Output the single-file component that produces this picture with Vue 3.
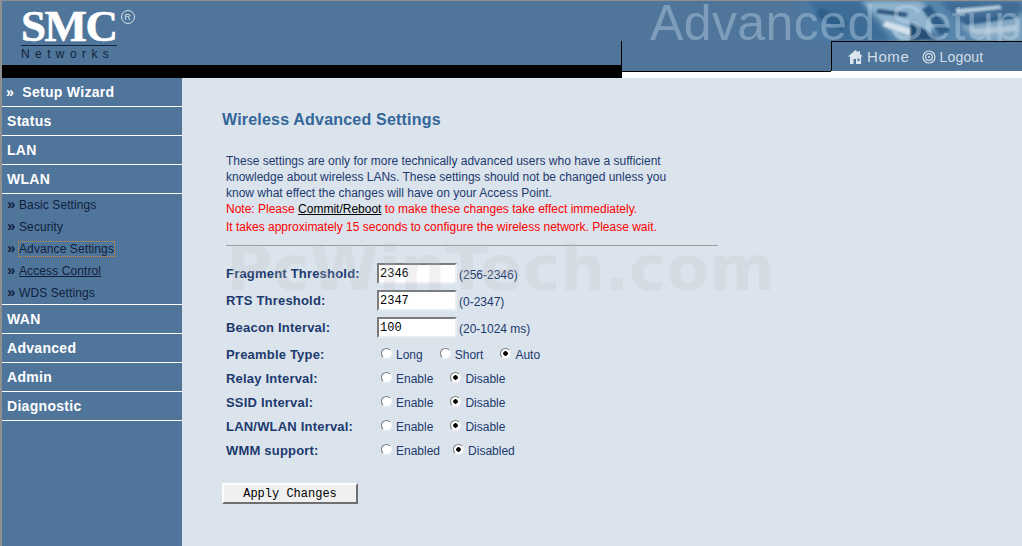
<script setup>
const topNav = ['Status', 'LAN', 'WLAN']
const subNav = [
  { label: 'Basic Settings' },
  { label: 'Security' },
  { label: 'Advance Settings', cls: 'focused' },
  { label: 'Access Control', cls: 'hovered' },
  { label: 'WDS Settings' }
]
const bottomNav = ['WAN', 'Advanced', 'Admin', 'Diagnostic']
const textRows = [
  { label: 'Fragment Threshold:', value: '2346', hint: '(256-2346)' },
  { label: 'RTS Threshold:', value: '2347', hint: '(0-2347)' },
  { label: 'Beacon Interval:', value: '100', hint: '(20-1024 ms)' }
]
const radioRows = [
  { label: 'Preamble Type:', name: 'pre', options: ['Long', 'Short', 'Auto'], checked: 2 },
  { label: 'Relay Interval:', name: 'relay', options: ['Enable', 'Disable'], checked: 1 },
  { label: 'SSID Interval:', name: 'ssid', options: ['Enable', 'Disable'], checked: 1 },
  { label: 'LAN/WLAN Interval:', name: 'lan', options: ['Enable', 'Disable'], checked: 1 },
  { label: 'WMM support:', name: 'wmm', options: ['Enabled', 'Disabled'], checked: 1, tight: true }
]
</script>

<template>
  <div class="page">
    <header class="header">
      <div class="head-left">
        <div class="logo">
          <div class="logo-top"><span class="smc">SMC</span><span class="reg">R</span></div>
          <div class="networks">Networks</div>
        </div>
        <div class="black-bar"></div>
      </div>
      <div class="head-right">
        <div class="banner">
          <svg class="texture" width="232" height="40" viewBox="0 0 232 40" preserveAspectRatio="none">
            <defs>
              <linearGradient id="fade" x1="0" x2="1" y1="0" y2="0">
                <stop offset="0" stop-color="#4f759b" />
                <stop offset="0.15" stop-color="#4a7ba4" />
                <stop offset="1" stop-color="#5f8cb0" />
              </linearGradient>
              <filter id="b2"><feGaussianBlur stdDeviation="2" /></filter>
              <filter id="b1"><feGaussianBlur stdDeviation="1" /></filter>
            </defs>
            <rect width="232" height="40" fill="url(#fade)" />
            <g filter="url(#b2)">
              <path d="M20 0 L70 0 L100 40 L40 40 Z" fill="#3d6d97" />
              <path d="M72 0 L130 0 L150 18 L135 40 L110 40 Z" fill="#8fb3cd" />
              <path d="M150 0 L232 0 L232 12 L170 22 Z" fill="#3f6c95" />
              <path d="M170 24 L232 14 L232 40 L190 40 Z" fill="#86a9c4" />
            </g>
            <g filter="url(#b1)">
              <path d="M88 8 L118 12 L116 16 L86 12 Z" fill="#2d587f" />
              <path d="M96 20 L128 30 L124 36 L92 25 Z" fill="#d5e3ec" />
              <path d="M120 20 L150 38 L120 40 Z" fill="#274f75" />
              <path d="M140 4 L160 30 L150 34 L132 8 Z" fill="#2f5d87" />
              <path d="M165 8 L210 4 L212 8 L168 13 Z" fill="#b3cadb" />
              <path d="M172 18 L228 13 L228 17 L176 24 Z" fill="#31608a" />
              <path d="M180 28 L226 24 L228 30 L186 34 Z" fill="#aec6d7" />
              <path d="M30 6 L58 22 L52 30 L26 14 Z" fill="#2f5f8a" />
            </g>
          </svg>
          <span class="banner-text">Advanced Setup</span>
        </div>
        <div class="tab-row">
          <div class="tab-spacer"></div>
          <nav class="tab">
            <a class="tab-link home">
              <svg width="17" height="16" viewBox="0 0 17 16">
                <path d="M8.5 1 L1 7.5 H3 V15 H6.5 V10 H9 V15 H14 V7.5 H16 L13 5 V2 H11.5 V3.6 Z M10.5 9.5 H12.5 V12 H10.5 Z" fill="#dbe5ed" fill-rule="evenodd" />
              </svg>
              Home
            </a>
            <a class="tab-link logout">
              <svg width="14" height="14" viewBox="0 0 14 14" fill="none" stroke="#d3dfe9">
                <circle cx="7" cy="7" r="6" stroke-width="1.2" />
                <circle cx="7" cy="7" r="3.4" stroke-width="1.2" />
                <circle cx="7" cy="7" r="1.1" fill="#d3dfe9" stroke="none" />
              </svg>
              Logout
            </a>
          </nav>
        </div>
      </div>
    </header>

    <div class="body">
      <aside class="sidebar">
        <a class="nav-item wizard"><span class="chev">»</span> Setup Wizard</a>
        <a v-for="item in topNav" :key="item" class="nav-item">{{ item }}</a>
        <div class="subnav">
          <div v-for="s in subNav" :key="s.label" class="sub-item">
            <span class="sub-chev">»</span>
            <a class="sub-link" :class="s.cls">{{ s.label }}</a>
          </div>
        </div>
        <a v-for="item in bottomNav" :key="item" class="nav-item">{{ item }}</a>
      </aside>

      <main class="main">
        <h1 class="title">Wireless Advanced Settings</h1>
        <div class="intro">
          <p>These settings are only for more technically advanced users who have a sufficient<br />knowledge about wireless LANs. These settings should not be changed unless you<br />know what effect the changes will have on your Access Point.</p>
          <p class="red">Note: Please <a class="commit">Commit/Reboot</a> to make these changes take effect immediately.</p>
          <p class="red second">It takes approximately 15 seconds to configure the wireless network. Please wait.</p>
        </div>
        <hr class="rule" />
        <form class="form" @submit.prevent>
          <div v-for="r in textRows" :key="r.label" class="row text-row">
            <label class="field-label">{{ r.label }}</label>
            <div class="control">
              <input class="text-input" type="text" :value="r.value" />
              <span class="hint">{{ r.hint }}</span>
            </div>
          </div>
          <div v-for="r in radioRows" :key="r.label" class="row radio-row">
            <label class="field-label">{{ r.label }}</label>
            <div class="control radios" :class="{ tight: r.tight }">
              <label v-for="(o, i) in r.options" :key="o" class="opt">
                <input class="radio" type="radio" :name="r.name" :checked="i === r.checked" />
                <span>{{ o }}</span>
              </label>
            </div>
          </div>
          <button class="apply" type="button">Apply Changes</button>
        </form>
        <div class="watermark">PcWinTech.com</div>
      </main>
    </div>
  </div>
</template>

<style>
html, body { margin: 0; padding: 0; }
</style>

<style scoped>
.page {
  width: 1022px;
  height: 546px;
  box-sizing: border-box;
  border-top: 1px solid #8f8f8f;
  border-left: 2px solid #8f8f8f;
  display: flex;
  flex-direction: column;
  overflow: hidden;
  font-family: "Liberation Sans", Arial, sans-serif;
  background: #dbe3ec;
}
.header { display: flex; height: 77px; flex: none; background: #fff; }
.head-left { width: 619px; flex: none; display: flex; flex-direction: column; }
.logo { height: 64px; background: #4f759b; padding: 6px 0 0 19px; box-sizing: border-box; }
.logo-top { display: flex; align-items: flex-start; height: 33px; }
.smc {
  font-family: "Liberation Serif", serif;
  font-weight: 700;
  font-size: 45px;
  line-height: 38px;
  color: #fff;
  letter-spacing: -1.5px;
  -webkit-text-stroke: 0.6px #fff;
}
.reg {
  margin: 3px 0 0 4px;
  width: 12px;
  height: 12px;
  border: 1px solid #d8e2ea;
  border-radius: 50%;
  color: #d8e2ea;
  font-size: 9px;
  line-height: 12px;
  text-align: center;
}
.networks {
  width: 96px;
  border-top: 1px solid #10233a;
  margin-top: 5px;
  padding-top: 2px;
  font-size: 12px;
  line-height: 12px;
  letter-spacing: 5.4px;
  color: #10233a;
  white-space: nowrap;
}
.black-bar { height: 13px; background: #000; }
.head-right { flex: 1; display: flex; flex-direction: column; min-width: 0; }
.banner {
  height: 40px;
  background: #4f759b;
  position: relative;
  overflow: hidden;
}
.texture { position: absolute; right: 0; top: 0; }
.banner-text {
  position: relative;
  display: block;
  padding-left: 29px;
  font-size: 50px;
  line-height: 44px;
  letter-spacing: 0.4px;
  white-space: nowrap;
  color: rgba(190, 212, 230, 0.42);
}
.tab-row { display: flex; height: 31px; border-left: 1px solid #000; margin-left: 0; box-sizing: border-box; height: 37px; }
.tab-spacer { width: 209px; height: 30px; background: #4f759b; border-bottom: 1px solid #000; flex: none; }
.tab {
  flex: 1;
  height: 30px;
  box-sizing: border-box;
  background: #4f759b;
  border-left: 1px solid #000;
  border-top: 1px solid #000;
  display: flex;
  align-items: center;
  padding: 0 0 0 15px;
  gap: 13px;
  color: #d3dfe9;
}
.tab-link { display: flex; align-items: center; gap: 3px; }
.home { font-size: 15px; letter-spacing: 0.6px; }
.logout { font-size: 14px; letter-spacing: 0.2px; }

.body { flex: 1; display: flex; min-height: 0; }
.sidebar { width: 180px; flex: none; background: #4f759b; display: flex; flex-direction: column; }
.nav-item {
  display: flex;
  align-items: center;
  height: 29px;
  flex: none;
  box-sizing: border-box;
  padding-left: 5px;
  border-bottom: 1px solid #fff;
  color: #fff;
  font-weight: 700;
  font-size: 14px;
  letter-spacing: 0.3px;
  white-space: pre;
}
.nav-item.wizard { height: 29px; padding-left: 4px; }
.chev { margin-right: 4px; }
.subnav { height: 110px; flex: none; border-bottom: 1px solid #fff; }
.sub-item {
  height: 22px;
  display: flex;
  align-items: center;
  padding-left: 5px;
  font-size: 12px;
  color: #11213d;
}
.sub-chev { font-size: 15px; font-weight: 700; width: 12px; line-height: 14px; margin-top: -3px; }
.sub-link { letter-spacing: 0.1px; line-height: 14px; }
.sub-link.focused { outline: 1px dotted #d88a2a; }
.sub-link.hovered { text-decoration: underline; }

.main {
  flex: 1;
  position: relative;
  padding: 32px 0 0 40px;
  color: #1c3a6e;
  font-size: 12px;
}
.title {
  margin: 0;
  font-size: 16px;
  line-height: 20px;
  font-weight: 700;
  color: #336699;
  letter-spacing: 0.2px;
}
.intro { margin: 23px 0 0 4px; line-height: 16px; white-space: nowrap; }
.intro p { margin: 0; }
.red { color: #ff0000; }
.second { margin-top: 2px !important; }
.commit { color: #000; text-decoration: underline; }
.rule {
  width: 492px;
  height: 1px;
  border: 0;
  background: #9c9c9c;
  margin: 10px 0 0 4px;
}
.form { margin: 14px 0 0 4px; display: flex; flex-direction: column; }
.row { display: grid; grid-template-columns: 151px 1fr; align-items: center; }
.text-row { height: 27px; }
.radio-row { height: 24px; }
.text-row + .radio-row { margin-top: 1px; }
.field-label { font-weight: 700; font-size: 13px; letter-spacing: 0.2px; color: #1c3a6e; white-space: nowrap; }
.control { display: flex; align-items: center; }
.text-input {
  width: 80px;
  height: 21px;
  box-sizing: border-box;
  border: 2px solid;
  border-color: #7c7c7c #e8edf2 #e8edf2 #7c7c7c;
  padding: 0 1px;
  background: #fff;
  font-family: "Liberation Mono", monospace;
  font-size: 12px;
  color: #000;
  outline: none;
  margin: 0;
}
.hint { margin-left: 2px; margin-top: 3px; }
.radios { padding-left: 4px; gap: 17px; }
.radios.tight { gap: 13px; }
.opt { display: flex; align-items: center; gap: 4px; }
.opt span { margin-top: 1px; }
.radio {
  appearance: none;
  -webkit-appearance: none;
  width: 11px;
  height: 11px;
  margin: -2px 0 0;
  border-radius: 50%;
  background: #fff;
  border: 1px solid;
  border-color: #7a7a7a #eef2f5 #eef2f5 #7a7a7a;
  box-sizing: border-box;
  position: relative;
}
.radio:checked { background: radial-gradient(circle, #000 0 2px, #fff 2.5px); }
.apply {
  align-self: flex-start;
  width: 136px;
  height: 21px;
  margin: 21px 0 0 -4px;
  padding: 0;
  box-sizing: border-box;
  border: 2px solid;
  border-color: #fff #6f6f6f #6f6f6f #fff;
  background: #f0f0f0;
  font-family: "Liberation Mono", monospace;
  font-size: 12px;
  color: #000;
}
.watermark {
  position: absolute;
  left: 44px;
  top: 155px;
  font-family: "DejaVu Sans", sans-serif;
  font-weight: 700;
  font-size: 63px;
  line-height: 72px;
  white-space: nowrap;
  color: rgba(190, 190, 190, 0.22);
  pointer-events: none;
}
</style>
